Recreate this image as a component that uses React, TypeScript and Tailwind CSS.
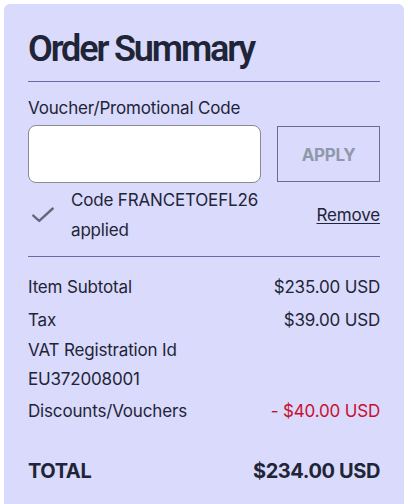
import React from "react";

function Row({ label, value, className = "" }: { label: string; value?: string; className?: string }) {
  return (
    <div className="flex items-start justify-between">
      <span>{label}</span>
      {value && <span className={className}>{value}</span>}
    </div>
  );
}

export default function App() {
  return (
    <div className="min-h-screen bg-white p-1 font-['Inter',sans-serif] text-[#1f2537]">
      <div className="w-[400px] rounded-md bg-[#d9dafc] px-6 pt-[23px] pb-10">
        <h2 className="border-b border-[#6b6ba8] pb-[10px] font-['Roboto',sans-serif] text-[36px] font-semibold leading-[44px] tracking-[-0.06em]">
          Order Summary
        </h2>

        <div className="border-b border-[#6b6ba8] pb-[11px] text-[17px] tracking-[-0.01em]">
          <label className="mt-[14px] block leading-6">Voucher/Promotional Code</label>
          <div className="mt-[5px] flex items-center gap-4">
            <input
              type="text"
              className="h-[58px] w-[233px] rounded-lg border border-[#8a8a94] bg-white px-3 outline-none"
            />
            <button className="h-[56px] w-[104px] border border-[#6b6f85] pt-[3px] text-[17px] font-bold tracking-[-0.02em] text-[#8f98aa]">
              APPLY
            </button>
          </div>
          <div className="mt-[2px] flex items-center">
            <svg
              className="ml-[2px] h-[26px] w-[26px] text-[#5f6b7a]"
              viewBox="0 0 24 24"
              fill="none"
              stroke="currentColor"
              strokeWidth="2.2"
              strokeLinecap="round"
              strokeLinejoin="round"
            >
              <path d="M3 12.5l5.5 5L21 6" />
            </svg>
            <div className="ml-[15px] flex-1 leading-[30px]">
              Code FRANCETOEFL26
              <br />
              applied
            </div>
            <a href="#" className="leading-6 underline underline-offset-2">
              Remove
            </a>
          </div>
        </div>

        <div className="mt-[15px] flex flex-col text-[17px] leading-[30px] tracking-[-0.01em]">
          <Row label="Item Subtotal" value="$235.00 USD" />
          <div className="mt-[3px]">
            <Row label="Tax" value="$39.00 USD" />
          </div>
          <span className="leading-[30px]">VAT Registration Id</span>
          <span className="leading-[28px]">EU372008001</span>
          <div className="mt-[3px]">
            <Row label="Discounts/Vouchers" value="- $40.00 USD" className="text-[#c8102e]" />
          </div>
          <div className="mt-[30px] flex items-center justify-between text-[20px] font-bold tracking-[-0.02em]">
            <span>TOTAL</span>
            <span>$234.00 USD</span>
          </div>
        </div>
      </div>
    </div>
  );
}
